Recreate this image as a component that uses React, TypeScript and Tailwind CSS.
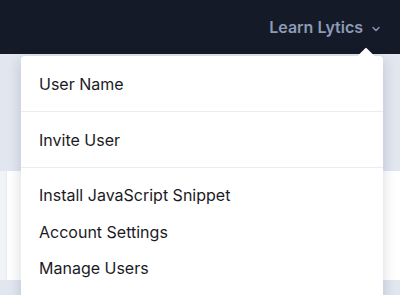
import { ChevronDown } from "lucide-react";

const groups = [["User Name"], ["Invite User"], ["Install JavaScript Snippet", "Account Settings", "Manage Users"]];

export default function App() {
  return (
    <div className="relative h-[295px] w-[400px] overflow-hidden bg-[#e1e6ef] font-['Inter',sans-serif]">
      {/* header */}
      <header className="flex h-[54px] items-center justify-end bg-[#151a28] pr-[18px]">
        <button className="flex items-center gap-[7px] text-[16px] font-semibold text-[#8c9bb5]">
          Learn Lytics
          <ChevronDown size={12} strokeWidth={2.75} className="mt-[3px]" />
        </button>
      </header>

      {/* background page */}
      <div className="h-[117px]" />
      <div className="flex h-[109px] bg-white">
        <div className="w-[7px] border-r border-[#e6e9ef] bg-[#f1f3f7]" />
        <div className="flex-1" />
      </div>

      {/* dropdown */}
      <div className="absolute left-[21px] top-[56px] w-[362px] rounded bg-white shadow-[0_4px_14px_rgba(30,40,70,0.18)]">
        <div className="absolute -top-[6px] right-[11px] h-[12px] w-[12px] rotate-45 rounded-[1px] bg-white" />
        {groups.map((items, i) => (
          <div
            key={i}
            className={
              i === 2
                ? "relative pt-[9px] pb-[20px]"
                : "relative border-b border-[#e9edf3] pt-[18px] pb-[17px]"
            }
          >
            {items.map((t) => (
              <div
                key={t}
                className={
                  i === 2
                    ? "px-[18px] py-[8.25px] text-[16px] leading-5 text-[#1b1b1f]"
                    : "px-[18px] text-[16px] leading-5 text-[#1b1b1f]"
                }
              >
                {t}
              </div>
            ))}
          </div>
        ))}
      </div>
    </div>
  );
}
